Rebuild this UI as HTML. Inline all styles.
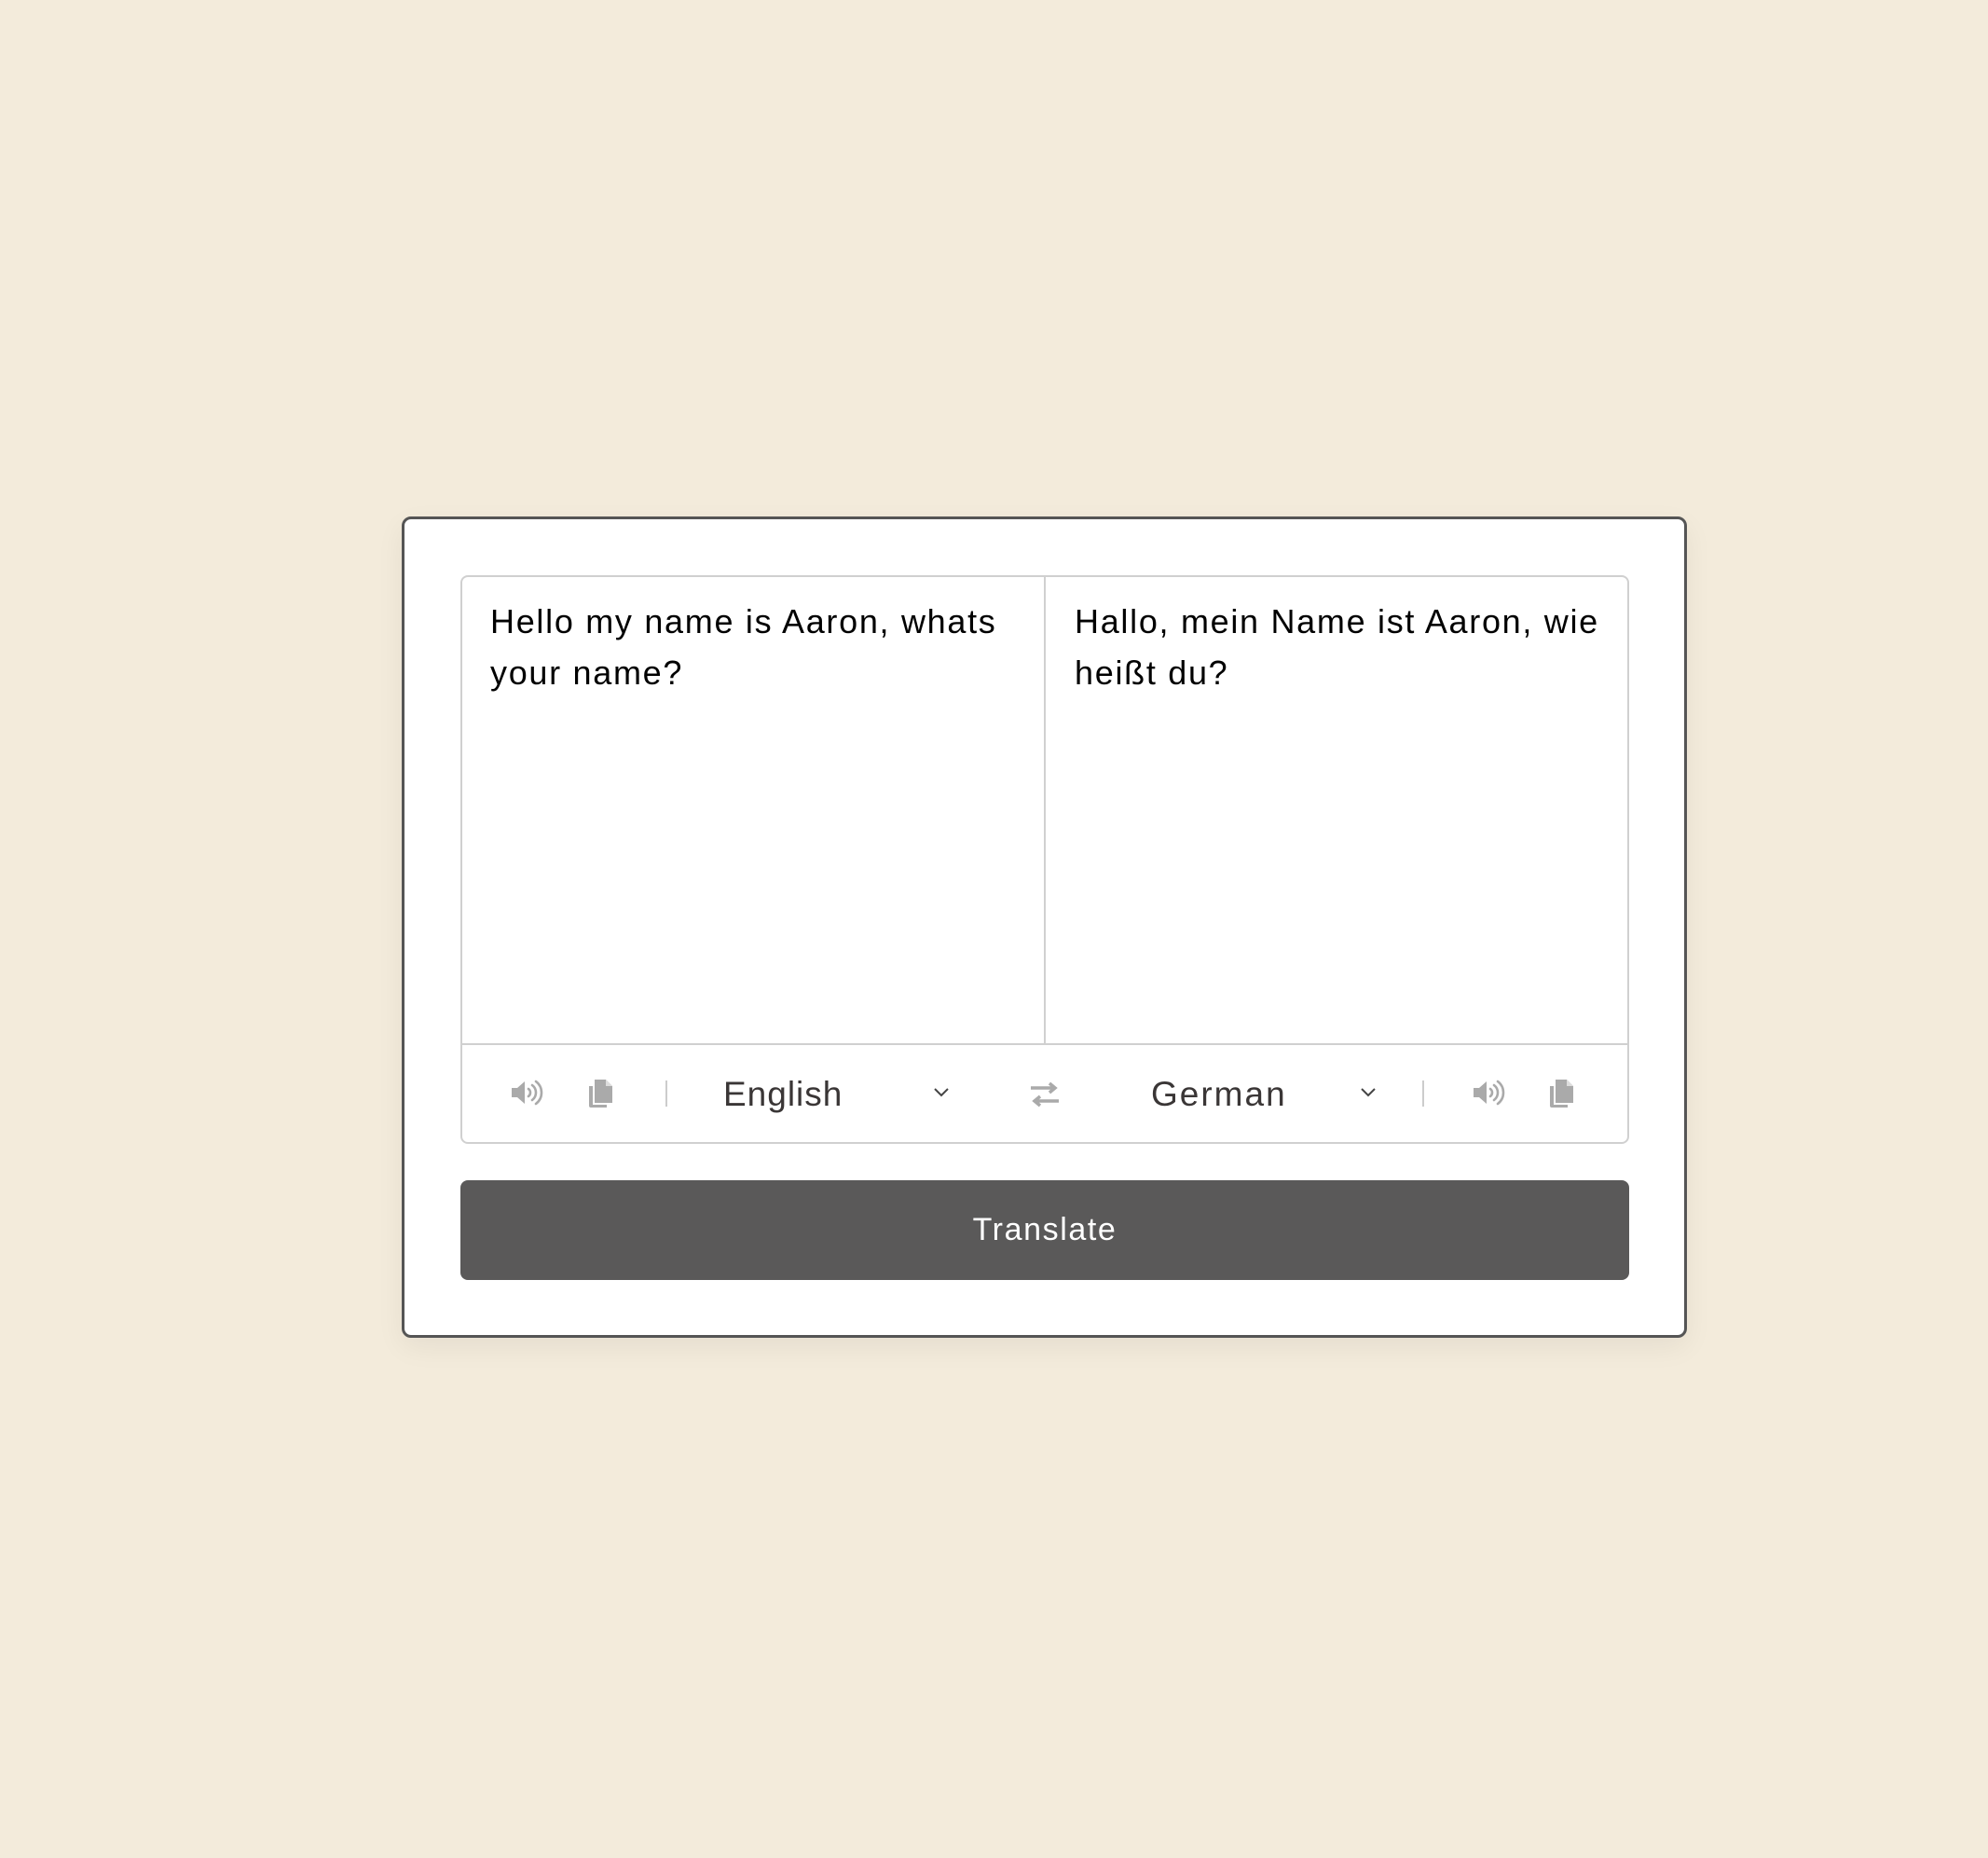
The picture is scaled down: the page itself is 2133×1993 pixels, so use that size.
<!DOCTYPE html>
<html><head><meta charset="utf-8"><style>
html,body{margin:0;padding:0;}
body{width:2133px;height:1993px;background:#f3ebdb;position:relative;overflow:hidden;font-family:"Liberation Sans",sans-serif;}
.card{position:absolute;left:431px;top:554px;width:1373px;height:875px;border:3px solid #555;border-radius:10px;background:#fff;box-shadow:0 10px 30px rgba(0,0,0,0.06);}
.box{position:absolute;left:494px;top:617px;width:1250px;height:606px;border:2px solid #d0d0d0;border-radius:8px;background:#fff;}
.vdiv{position:absolute;left:1120px;top:619px;width:2px;height:501px;background:#d0d0d0;}
.hdiv{position:absolute;left:496px;top:1119px;width:1250px;height:2px;background:#d0d0d0;}
.txt{position:absolute;font-size:36px;line-height:55px;color:#000;letter-spacing:1.7px;white-space:nowrap;}
.lang{position:absolute;font-size:37px;color:#3a3636;top:1153px;letter-spacing:1px;}
.sep{position:absolute;width:2px;height:28px;top:1159px;background:#ccc;}
.btn{position:absolute;left:494px;top:1266px;width:1254px;height:107px;background:#5a5959;border-radius:8px;color:#fff;font-size:34px;text-align:center;line-height:107px;letter-spacing:1.6px;}
svg{position:absolute;}
</style></head><body>
<div class="card"></div>
<div class="box"></div>
<div class="vdiv"></div>
<div class="hdiv"></div>
<div class="txt" style="left:526px;top:639px;">Hello my name is Aaron, whats<br>your name?</div>
<div class="txt" style="left:1153px;top:639px;">Hallo, mein Name ist Aaron, wie<br>heißt du?</div>

<svg style="left:548px;top:1158px" width="36" height="28" viewBox="0 0 36 28"><path d="M1 9h6l8-7v24l-8-7H1z" fill="#aaa"/><path d="M19 10a5 5 0 0 1 0 8M23 6a10 10 0 0 1 0 16M27 2a15 15 0 0 1 0 24" stroke="#aaa" stroke-width="2.6" fill="none" stroke-linecap="round"/></svg>
<svg style="left:631px;top:1157px" width="28" height="32" viewBox="0 0 28 32"><path d="M1 8h4v20h15v3H3a2 2 0 0 1-2-2z" fill="#aaa"/><path d="M7 1h12l7 7v18H7z" fill="#aaa"/><path d="M19 1v7h7" fill="#ddd"/></svg>
<div class="sep" style="left:714px"></div>
<div class="lang" style="left:776px">English</div>
<svg style="left:1001px;top:1166px" width="18" height="12" viewBox="0 0 18 12"><path d="M2 2l7 7 7-7" stroke="#444" stroke-width="2" fill="none"/></svg>
<svg style="left:1104px;top:1160px" width="34" height="28" viewBox="0 0 34 28"><path d="M2 7h26M22 2l6 5-6 5" stroke="#aaa" stroke-width="3.5" fill="none"/><path d="M32 21H6M12 16l-6 5 6 5" stroke="#aaa" stroke-width="3.5" fill="none"/></svg>
<div class="lang" style="left:1235px;letter-spacing:2px">German</div>
<svg style="left:1459px;top:1166px" width="18" height="12" viewBox="0 0 18 12"><path d="M2 2l7 7 7-7" stroke="#444" stroke-width="2" fill="none"/></svg>
<div class="sep" style="left:1526px"></div>
<svg style="left:1580px;top:1158px" width="36" height="28" viewBox="0 0 36 28"><path d="M1 9h6l8-7v24l-8-7H1z" fill="#aaa"/><path d="M19 10a5 5 0 0 1 0 8M23 6a10 10 0 0 1 0 16M27 2a15 15 0 0 1 0 24" stroke="#aaa" stroke-width="2.6" fill="none" stroke-linecap="round"/></svg>
<svg style="left:1662px;top:1157px" width="28" height="32" viewBox="0 0 28 32"><path d="M1 8h4v20h15v3H3a2 2 0 0 1-2-2z" fill="#aaa"/><path d="M7 1h12l7 7v18H7z" fill="#aaa"/><path d="M19 1v7h7" fill="#ddd"/></svg>

<div class="btn">Translate</div>
</body></html>
